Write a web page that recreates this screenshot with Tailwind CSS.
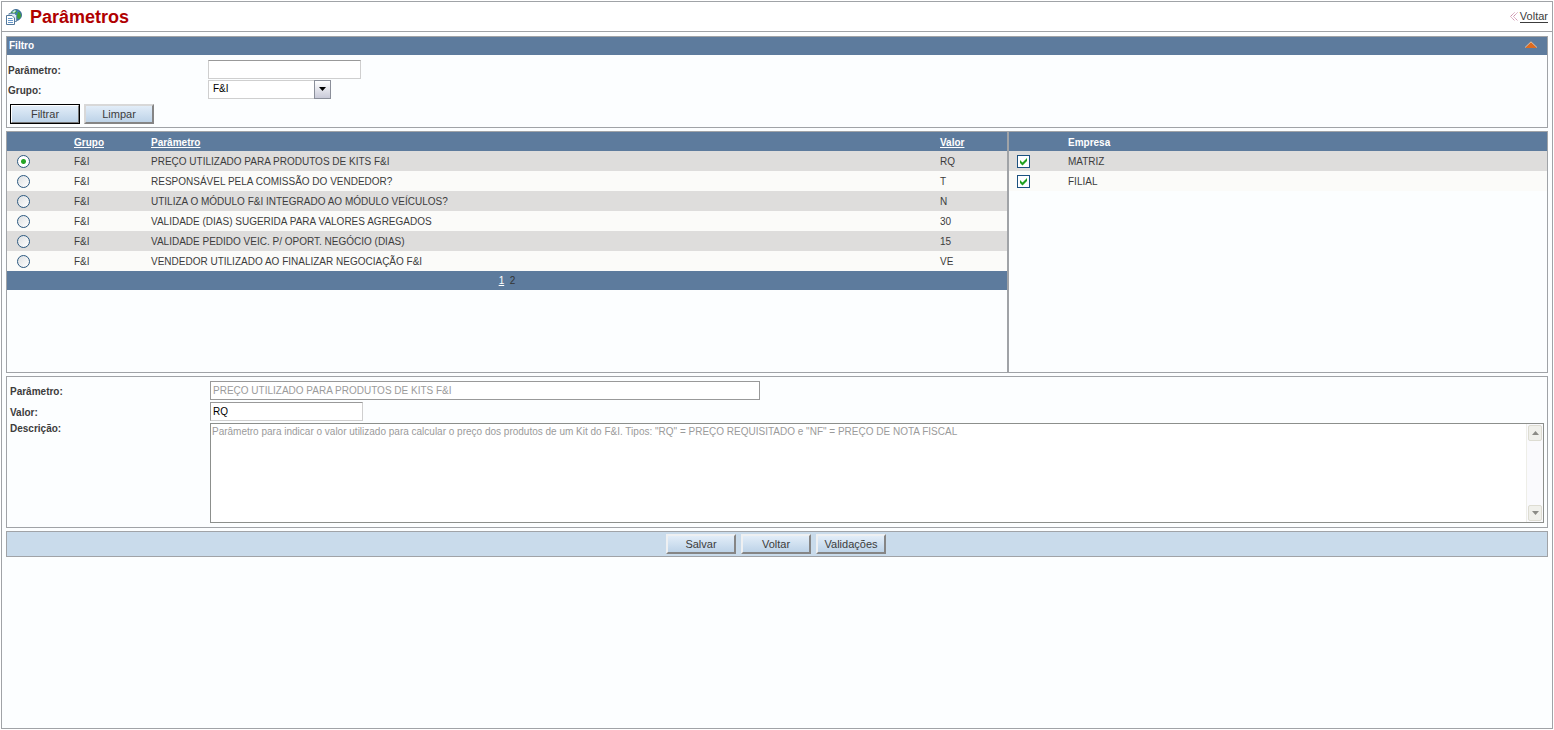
<!DOCTYPE html>
<html lang="pt-BR">
<head>
<meta charset="utf-8">
<title>Parâmetros</title>
<script src="https://cdn.jsdelivr.net/npm/@tailwindcss/browser@4"></script>
</head>
<body class="flex min-h-screen flex-col bg-white p-px font-['Liberation_Sans',Arial,sans-serif] text-[10px] leading-4 text-[#3c3c3c]">
<div class="flex grow flex-col border border-[#a0a3a7] bg-[#fcfeff]">
  <header class="flex h-[30px] items-center justify-between border-b border-[#a0a3a7] bg-white pl-1 pr-1">
    <div class="flex items-center gap-2">
      <svg class="size-4" viewBox="0 0 16 16" aria-hidden="true">
        <circle cx="10" cy="6" r="5.5" fill="#3f7fb8" stroke="#25557f" stroke-width=".8"/>
        <path d="m5 4 2-2 3-.8 1 1.300-2 2-3 1.500zM12 2.500l2.300 1.500.8 3-1.600 3-2-.5-.5-3z" fill="#3f9f35"/>
        <path d="m6 3 3-2 1 1-2 2z" fill="#cfeaf0"/>
        <path d="M3 4.500h5.500l2 2v6H3z" fill="#dceaf6" stroke="#6d8dab"/>
        <path d="M.5 6.500h5.500L8.500 9v6.500h-8z" fill="#fff" stroke="#54789b"/>
        <path d="M2 9.500h4.500M2 11.500h5M2 13.500h5" stroke="#6697c9"/>
      </svg>
      <h1 class="text-lg font-bold text-[#b00000]">Parâmetros</h1>
    </div>
    <a href="#" class="flex items-center gap-0.5 text-[11px] text-[#3c3c3c]">
      <svg class="h-[9px] w-2" viewBox="0 0 8 9" aria-hidden="true"><path d="M4.500.5.500 4.500l4 4M7.500.5l-4 4 4 4" fill="none" stroke="#c98aa6" stroke-dasharray="1.400 .4"/></svg>
      <span class="border-b border-[#3c3c3c] leading-[11px]">Voltar</span>
    </a>
  </header>

  <main class="flex flex-col gap-[3px] px-1 pt-1">
    <section class="border border-[#a0a3a7]">
      <div class="flex h-[18px] items-center justify-between bg-[#5d7b9d] pl-0.5 pr-2.5">
        <h2 class="font-bold text-white">Filtro</h2>
        <button type="button" aria-label="Recolher filtro" class="pb-1"><svg class="h-[7px] w-3" viewBox="0 0 12 7" aria-hidden="true"><path d="M0 7 6 .5 12 7z" fill="#dd6b20"/><path d="M0 6.500 6 .8l6 5.700" fill="none" stroke="#f7e6cb" stroke-width=".7"/></svg></button>
      </div>
      <form class="px-px pt-1">
        <div class="flex h-5 items-center">
          <label for="fp" class="w-[200px] pt-1 font-bold">Parâmetro:</label>
          <input id="fp" type="text" class="h-[19px] w-[153px] border border-[#cfcfcf] border-t-[#999] bg-white px-1 text-black">
        </div>
        <div class="flex h-5 items-center">
          <label for="fg" class="w-[200px] pt-1 font-bold">Grupo:</label>
          <div class="relative h-[19px] w-[123px]">
            <select id="fg" class="h-full w-full appearance-none border border-[#cfcfcf] bg-white pl-1 text-black"><option>F&amp;I</option></select>
            <span class="pointer-events-none absolute inset-y-0 right-0 flex w-[17px] items-center justify-center border border-[#8b8f9a] bg-linear-to-b from-white to-[#c9cad8]"><svg class="h-1 w-[7px]" viewBox="0 0 7 4" aria-hidden="true"><path d="M0 0h7L3.500 4z"/></svg></span>
          </div>
        </div>
        <div class="flex gap-1 pt-[5px] pb-[3px] pl-0.5 text-[11px]">
          <button type="button" class="h-5 w-[70px] border border-black"><span class="flex h-full items-center justify-center border border-t-white border-l-white border-r-[#777] border-b-[#777] bg-linear-to-b from-[#e2edf8] to-[#bdd3e8]">Filtrar</span></button>
          <button type="button" class="h-5 w-[70px] border-2 border-t-[#d8d8d8] border-l-[#d8d8d8] border-r-[#858585] border-b-[#858585] bg-linear-to-b from-[#e2edf8] to-[#bdd3e8]">Limpar</button>
        </div>
      </form>
    </section>

    <section class="grid min-h-[242px] grid-cols-[13fr_7fr] border border-[#a0a3a7]">
      <div class="border-r border-[#a0a3a7]">
        <table class="w-full table-fixed border-collapse text-left">
          <colgroup><col class="w-[67px]"><col class="w-[77px]"><col><col class="w-[67px]"></colgroup>
          <thead><tr class="h-[19px] bg-[#5d7b9d] text-white"><th></th><th class="pt-0.5"><a href="#" class="underline">Grupo</a></th><th class="pt-0.5"><a href="#" class="underline">Parâmetro</a></th><th class="pt-0.5"><a href="#" class="underline">Valor</a></th></tr></thead>
          <tbody id="params"></tbody>
          <tfoot><tr class="h-[19px] bg-[#5d7b9d] text-center"><td colspan="4"><a href="#" class="text-white underline">1</a>&nbsp; <a href="#" class="text-[#333]">2</a></td></tr></tfoot>
        </table>
      </div>
      <div class="border-l border-[#a0a3a7]">
        <table class="w-full table-fixed border-collapse text-left">
          <colgroup><col class="w-[59px]"><col></colgroup>
          <thead><tr class="h-[19px] bg-[#5d7b9d] text-white"><th></th><th class="pt-0.5">Empresa</th></tr></thead>
          <tbody id="companies"></tbody>
        </table>
      </div>
    </section>

    <section class="border border-[#a0a3a7] pt-1 pr-[3px] pb-1 pl-[3px]">
      <div class="flex h-[21px] items-start">
        <label for="dp" class="w-[200px] pt-[3px] font-bold">Parâmetro:</label>
        <input id="dp" type="text" disabled value="PREÇO UTILIZADO PARA PRODUTOS DE KITS F&amp;I" class="h-[19px] w-[550px] border border-[#999] bg-white px-0.5 text-[#9b9b9b]">
      </div>
      <div class="flex h-[21px] items-start">
        <label for="dv" class="w-[200px] pt-[3px] font-bold">Valor:</label>
        <input id="dv" type="text" value="RQ" class="h-[19px] w-[153px] border border-[#cfcfcf] border-t-[#999] border-l-[#999] bg-white px-0.5 text-black">
      </div>
      <div class="flex items-start">
        <label for="dd" class="w-[200px] shrink-0 font-bold leading-3">Descrição:</label>
        <div class="flex h-[100px] grow border border-[#8c8f8c] bg-white">
          <textarea id="dd" disabled class="grow resize-none overflow-hidden px-px text-[#9b9b9b]">Parâmetro para indicar o valor utilizado para calcular o preço dos produtos de um Kit do F&amp;I. Tipos: "RQ" = PREÇO REQUISITADO e "NF" = PREÇO DE NOTA FISCAL</textarea>
          <div class="flex w-[17px] flex-col justify-between border-l border-[#eeeee8] bg-[#fafafd] p-px">
            <button type="button" disabled aria-label="Rolar para cima" class="flex h-4 items-center justify-center rounded-xs border border-[#dddcd2] bg-[#f0f0eb]"><svg class="h-1 w-[7px]" viewBox="0 0 7 4" aria-hidden="true"><path d="M0 4h7L3.500 0z" fill="#8b8b86"/></svg></button>
            <button type="button" disabled aria-label="Rolar para baixo" class="flex h-4 items-center justify-center rounded-xs border border-[#dddcd2] bg-[#f0f0eb]"><svg class="h-1 w-[7px]" viewBox="0 0 7 4" aria-hidden="true"><path d="M0 0h7L3.500 4z" fill="#8b8b86"/></svg></button>
          </div>
        </div>
      </div>
    </section>

    <div class="flex h-[26px] items-center justify-center gap-[5px] border border-[#a0a3a7] bg-[#c9dbeb] pr-0.5 text-[11px]">
      <button type="button" class="h-5 w-[70px] border-2 border-t-[#eef0f2] border-l-[#eef0f2] border-r-[#858585] border-b-[#858585] bg-linear-to-b from-[#e2edf8] to-[#bdd3e8]">Salvar</button>
      <button type="button" class="h-5 w-[70px] border-2 border-t-[#eef0f2] border-l-[#eef0f2] border-r-[#858585] border-b-[#858585] bg-linear-to-b from-[#e2edf8] to-[#bdd3e8]">Voltar</button>
      <button type="button" class="h-5 w-[70px] border-2 border-t-[#eef0f2] border-l-[#eef0f2] border-r-[#858585] border-b-[#858585] bg-linear-to-b from-[#e2edf8] to-[#bdd3e8]">Validações</button>
    </div>
  </main>
</div>
<script>
const params = [
  ['PREÇO UTILIZADO PARA PRODUTOS DE KITS F&amp;I', 'RQ'],
  ['RESPONSÁVEL PELA COMISSÃO DO VENDEDOR?', 'T'],
  ['UTILIZA O MÓDULO F&amp;I INTEGRADO AO MÓDULO VEÍCULOS?', 'N'],
  ['VALIDADE (DIAS) SUGERIDA PARA VALORES AGREGADOS', '30'],
  ['VALIDADE PEDIDO VEIC. P/ OPORT. NEGÓCIO (DIAS)', '15'],
  ['VENDEDOR UTILIZADO AO FINALIZAR NEGOCIAÇÃO F&amp;I', 'VE'],
];
document.getElementById('params').innerHTML = params.map(([name, value], i) => `
  <tr class="h-5 odd:bg-[#dedddc] even:bg-[#fbfbf9]">
    <td class="pl-2.5"><input type="radio" name="param" aria-label="${name}" ${i ? '' : 'checked'} class="block size-[13px] appearance-none rounded-full border border-[#2b587f] bg-linear-to-br from-[#dcdfe2] to-white checked:bg-[radial-gradient(circle,#26a526_0_2px,#fff_3px)]"></td>
    <td class="pt-0.5">F&amp;I</td><td class="pt-0.5">${name}</td><td class="pt-0.5">${value}</td>
  </tr>`).join('');
document.getElementById('companies').innerHTML = ['MATRIZ', 'FILIAL'].map((name, i) => `
  <tr class="h-5 odd:bg-[#dedddc] even:bg-[#fbfbf9]">
    <td class="pl-2"><div class="relative size-[13px]"><input id="c${i}" type="checkbox" checked class="block size-[13px] appearance-none border border-[#1c5180] bg-white"><svg class="pointer-events-none absolute inset-0 size-[13px]" viewBox="0 0 13 13" aria-hidden="true"><path d="M3 5v3l2.500 2.500L10 6V3L5.500 7.500z" fill="#21a121"/></svg></div></td>
    <td class="pt-0.5"><label for="c${i}">${name}</label></td>
  </tr>`).join('');
</script>
</body>
</html>
